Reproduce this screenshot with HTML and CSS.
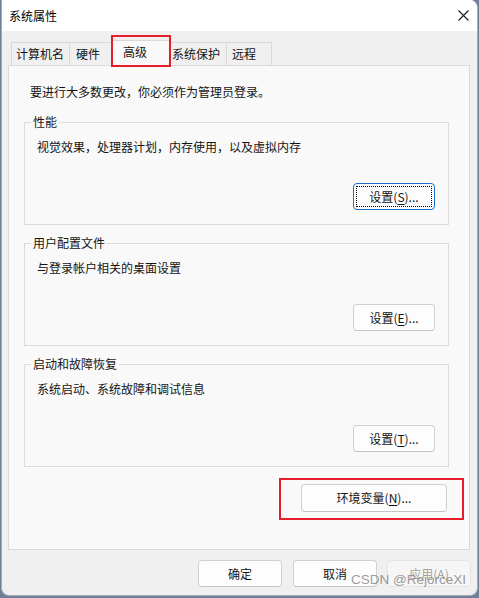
FILE: index.html
```html
<!DOCTYPE html>
<html lang="zh-CN">
<head>
<meta charset="utf-8">
<title>系统属性</title>
<link rel="stylesheet" href="styles.css">
</head>
<body>
<div class="window">
  <header class="titlebar">
    <span class="title">系统属性</span>
    <svg class="close" width="11" height="11" viewBox="0 0 11 11" aria-hidden="true"><path d="M0.5 0.5L10.5 10.5M10.5 0.5L0.5 10.5" stroke="#1b1b1b" stroke-width="1.1" fill="none"/></svg>
  </header>
  <main class="content">
    <nav class="tabs">
      <div class="tab tab-name">计算机名</div>
      <div class="tab tab-hw">硬件</div>
      <div class="tab tab-adv selected">高级</div>
      <div class="tab tab-prot">系统保护</div>
      <div class="tab tab-remote">远程</div>
    </nav>
    <section class="panel">
      <p class="intro">要进行大多数更改，你必须作为管理员登录。</p>
      <fieldset class="group">
        <legend>性能</legend>
        <p class="desc">视觉效果，处理器计划，内存使用，以及虚拟内存</p>
        <div class="actions"><button class="btn btn-set default">设置(<u>S</u>)...</button></div>
      </fieldset>
      <fieldset class="group">
        <legend>用户配置文件</legend>
        <p class="desc">与登录帐户相关的桌面设置</p>
        <div class="actions"><button class="btn btn-set">设置(<u>E</u>)...</button></div>
      </fieldset>
      <fieldset class="group">
        <legend>启动和故障恢复</legend>
        <p class="desc">系统启动、系统故障和调试信息</p>
        <div class="actions"><button class="btn btn-set">设置(<u>T</u>)...</button></div>
      </fieldset>
      <div class="env-row"><button class="btn btn-env">环境变量(<u>N</u>)...</button></div>
    </section>
    <footer class="dialog-buttons">
      <button class="btn btn-dlg btn-ok">确定</button>
      <button class="btn btn-dlg">取消</button>
      <button class="btn btn-dlg disabled">应用(A)</button>
    </footer>
  </main>
  <div class="mark mark-tab"></div>
  <div class="mark mark-env"></div>
  <div class="watermark">CSDN @RejorceXI</div>
</div>
</body>
</html>
```

FILE: styles.css
```css
* { box-sizing: border-box; }

html, body {
  margin: 0;
  padding: 0;
}

body {
  background: #6e8097;
  font-family: "Noto Sans CJK SC", "Noto Sans", sans-serif;
  font-size: 12px;
  color: #141414;
}

.window {
  position: relative;
  width: 477px;
  height: 596px;
  margin-left: 1px;
  background: #f0f0f0;
  border: 1px solid #a3acb7;
  border-top: none;
  border-radius: 0 8px 8px 8px;
  overflow: hidden;
  display: flex;
  flex-direction: column;
}

.titlebar {
  height: 31px;
  flex: none;
  background: #ffffff;
  display: flex;
  align-items: center;
  justify-content: space-between;
  padding: 0 8px 0 7px;
}

.title {
  line-height: 16px;
  color: #000;
}

.close { display: block; }

.content {
  flex: 1;
  display: flex;
  flex-direction: column;
  padding: 0 7px 0 6px;
}

.tabs {
  flex: none;
  height: 34px;
  padding-top: 9px;
  padding-left: 3px;
  display: flex;
  align-items: flex-end;
}

.tab {
  height: 23px;
  line-height: 22px;
  border: 1px solid #d9d9d9;
  border-bottom: none;
  background: #f0f0f0;
  margin-right: -1px;
  white-space: nowrap;
  color: #141414;
}

.tab.selected {
  position: relative;
  z-index: 1;
  height: 26px;
  margin-bottom: -1px;
  background: #f9f9f9;
}

.tab-name { width: 59px; padding-left: 4px; }
.tab-hw { width: 44px; padding-left: 6px; }
.tab-adv { width: 58px; padding-left: 10px; }
.tab-prot { width: 58px; padding-left: 2px; }
.tab-remote { width: 46px; padding-left: 5px; }

.panel {
  flex: 1;
  background: #f9f9f9;
  border: 1px solid #dadada;
  padding: 18px 20px 0 15px;
}

.intro {
  margin: 0 0 0 6px;
  line-height: 16px;
}

.group {
  margin: 14px 0 0 0;
  padding: 0 13px 14px 0;
  border: 1px solid #dcdcdc;
  min-width: 0;
}

.group + .group { margin-top: 10px; }

.group legend {
  margin-left: 6px;
  padding: 0 2px;
  line-height: 16px;
}

.desc {
  margin: 9px 0 0 12px;
  line-height: 16px;
}

.actions {
  margin-top: 28px;
  display: flex;
  justify-content: flex-end;
}

.btn {
  position: relative;
  font-family: "Noto Sans CJK SC", "Noto Sans", sans-serif;
  font-size: 12px;
  color: #141414;
  background: #fdfdfd;
  border: 1px solid #d0d0d0;
  border-bottom-color: #c4c4c4;
  border-radius: 4px;
  padding: 0;
  line-height: 16px;
}

.btn u { text-underline-offset: 2px; }

.btn-set { width: 82px; height: 27px; }

.btn.default {
  border-color: #1b6fc8;
}

.btn.default::after {
  content: "";
  position: absolute;
  inset: 2px;
  border: 1px dotted #000;
  border-radius: 1px;
}

.env-row {
  margin-top: 17px;
  display: flex;
  justify-content: flex-end;
  padding-right: 2px;
}

.btn-env { width: 146px; height: 28px; }

.dialog-buttons {
  flex: none;
  display: flex;
  justify-content: flex-end;
  gap: 10px;
  padding: 10px 0 8px 0;
  margin-right: -1px;
}

.btn-dlg { width: 84px; height: 27px; }

.btn-ok { margin-right: 1px; }

.btn.disabled {
  background: #f6f6f6;
  border-color: #e4e4e4;
  color: #a3a3a3;
}

.mark {
  position: absolute;
  z-index: 2;
  border: 2px solid #e41f29;
  pointer-events: none;
}

.mark-tab { left: 109px; top: 35px; width: 60px; height: 32px; }
.mark-env { left: 277px; top: 478px; width: 185px; height: 42px; }

.watermark {
  position: absolute;
  z-index: 3;
  left: 349px;
  top: 572px;
  font-family: "Liberation Sans", Arial, sans-serif;
  font-size: 13.5px;
  line-height: 16px;
  color: rgba(130, 130, 130, 0.8);
  white-space: nowrap;
}
```
